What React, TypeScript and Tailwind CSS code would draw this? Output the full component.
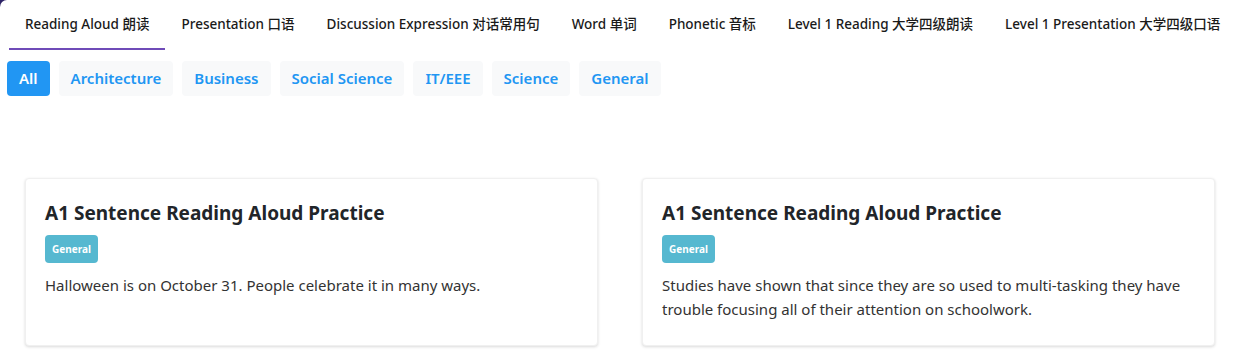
import React from "react";

const tabs = [
  "Reading Aloud 朗读",
  "Presentation 口语",
  "Discussion Expression 对话常用句",
  "Word 单词",
  "Phonetic 音标",
  "Level 1 Reading 大学四级朗读",
  "Level 1 Presentation 大学四级口语",
];

const filters = ["All", "Architecture", "Business", "Social Science", "IT/EEE", "Science", "General"];

const cards = [
  {
    title: "A1 Sentence Reading Aloud Practice",
    tag: "General",
    body: "Halloween is on October 31. People celebrate it in many ways.",
  },
  {
    title: "A1 Sentence Reading Aloud Practice",
    tag: "General",
    body: "Studies have shown that since they are so used to multi-tasking they have trouble focusing all of their attention on schoolwork.",
  },
];

const font = { fontFamily: '"Noto Sans", "Noto Sans CJK SC", sans-serif' };

export default function App() {
  return (
    <div className="w-[1243px] h-[364px] bg-[#2d2366]" style={font}>
      <div className="w-full h-full bg-white rounded-tl-[7px] overflow-hidden">
        <div className="flex pl-[9px] h-[50px]">
          {tabs.map((t, i) => (
            <div
              key={t}
              className={`px-4 flex items-center text-[13.5px] font-medium text-[#1a1a1a] whitespace-nowrap border-b-2 ${
                i === 0 ? "border-[#6f4bb8]" : "border-transparent"
              }`}
            >
              {t}
            </div>
          ))}
        </div>
        <div className="flex gap-[9px] pl-[7px] mt-[11px]">
          {filters.map((f, i) => (
            <div
              key={f}
              className={`h-[35px] px-3 flex items-center rounded-[4px] text-[15px] font-semibold ${
                i === 0 ? "bg-[#2196f3] text-white" : "bg-[#f8f9fa] text-[#2196f3]"
              }`}
            >
              {f}
            </div>
          ))}
        </div>
        <div className="grid grid-cols-2 gap-[44px] pl-[25px] pr-[28px] mt-[82px]">
          {cards.map((c, i) => (
            <div
              key={i}
              className="h-[168px] bg-white rounded-[4px] border border-[#f0f0f0] shadow-[0_1px_3px_rgba(0,0,0,0.15)] px-[19px] pt-[21px]"
            >
              <div className="text-[19px] font-bold text-[#212529] leading-[26px]">{c.title}</div>
              <div className="mt-[9px] inline-flex items-center h-[28px] px-[7px] rounded-[4px] bg-[#56b8d0] text-white text-[10px] font-bold">
                {c.tag}
              </div>
              <div className="mt-[10px] text-[15px] leading-[24px] text-[#333]">{c.body}</div>
            </div>
          ))}
        </div>
      </div>
    </div>
  );
}
